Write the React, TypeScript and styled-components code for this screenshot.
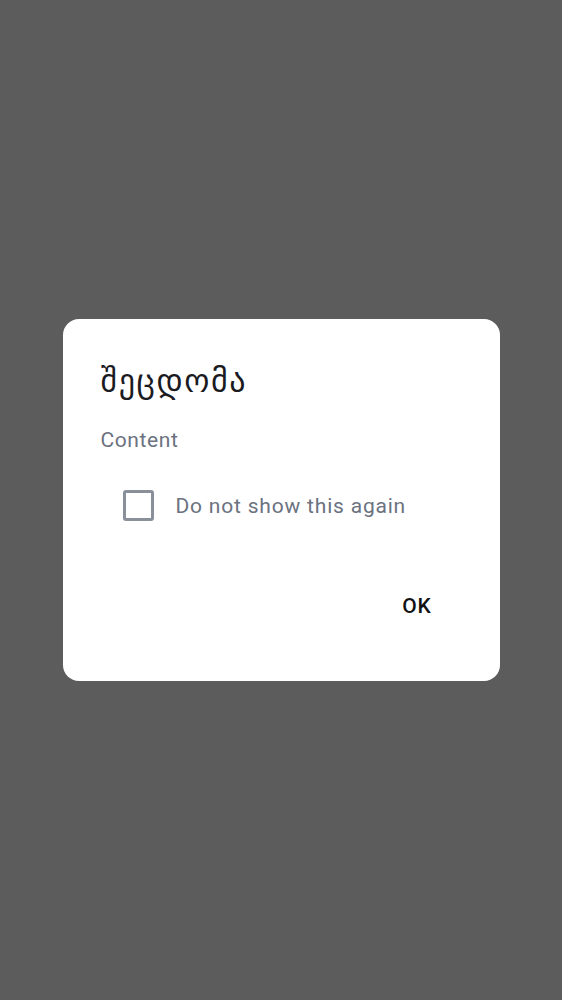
import React, { useState } from 'react'
import styled, { createGlobalStyle } from 'styled-components'

const GlobalStyle = createGlobalStyle`
  html, body {
    margin: 0;
    padding: 0;
    height: 100%;
  }
  body {
    background: #5c5c5c;
    font-family: Roboto, 'Liberation Sans', sans-serif;
  }
  #root {
    height: 100%;
  }
`

function App() {
  const [checked, setChecked] = useState(false)

  return (
    <>
      <GlobalStyle />
      <Backdrop>
        <Dialog>
          <Title>შეცდომა</Title>
          <Content>Content</Content>
          <CheckRow onClick={() => setChecked(!checked)}>
            <CheckBox checked={checked} />
            <CheckLabel>Do not show this again</CheckLabel>
          </CheckRow>
          <Actions>
            <TextButton>OK</TextButton>
          </Actions>
        </Dialog>
      </Backdrop>
    </>
  )
}

export default App

const Backdrop = styled.div`
  height: 1000px;
  display: flex;
  justify-content: center;
  align-items: center;
  background: #5c5c5c;
`

const Dialog = styled.div`
  width: 437px;
  box-sizing: border-box;
  padding: 44px 38px 63px 38px;
  background: #ffffff;
  border-radius: 16px;
  display: flex;
  flex-direction: column;
`

const Title = styled.div`
  font-family: 'DejaVu Sans', sans-serif;
  font-size: 32px;
  line-height: 36px;
  letter-spacing: 1.6px;
  color: #1b1b1f;
`

const Content = styled.div`
  margin-top: 28px;
  font-size: 21px;
  line-height: 26px;
  letter-spacing: 0.6px;
  color: #6b7280;
`

const CheckRow = styled.label`
  margin-top: 37px;
  padding-left: 22px;
  display: flex;
  align-items: center;
  gap: 22px;
  cursor: pointer;
`

const CheckBox = styled.span<{ checked: boolean }>`
  width: 31px;
  height: 31px;
  box-sizing: border-box;
  border: 3px solid #8a909a;
  border-radius: 3px;
  background: ${(p) => (p.checked ? '#8a909a' : 'transparent')};
`

const CheckLabel = styled.span`
  font-size: 21px;
  letter-spacing: 0.8px;
  color: #6b7280;
`

const Actions = styled.div`
  margin-top: 73px;
  display: flex;
  justify-content: flex-end;
`

const TextButton = styled.button`
  border: none;
  background: transparent;
  padding: 0 30px 0 0;
  font-family: Roboto, 'Liberation Sans', sans-serif;
  font-size: 21px;
  font-weight: 500;
  letter-spacing: 0.8px;
  color: #111114;
  cursor: pointer;
`
